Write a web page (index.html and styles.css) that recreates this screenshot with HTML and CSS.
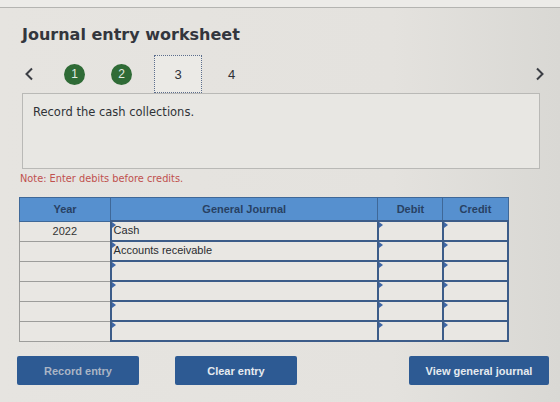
FILE: index.html
```html
<!DOCTYPE html>
<html lang="en">
<head>
    <meta charset="UTF-8">
    <meta name="viewport" content="width=device-width, initial-scale=1.0">
    <title>Journal entry worksheet</title>
    <link rel="stylesheet" href="styles.css">
</head>
<body>
    <div class="topbar"></div>

    <div class="sheet">
        <h1>Journal entry worksheet</h1>

        <!-- step navigation -->
        <nav class="steps">
            <span class="arrow prev">
                <svg width="10" height="14" viewBox="0 0 10 14"><polyline points="8,1.5 2.5,7 8,12.5" fill="none" stroke="#3b3e44" stroke-width="2"/></svg>
            </span>
            <span class="step done first">1</span>
            <span class="step done">2</span>
            <span class="step current">3</span>
            <span class="step plain">4</span>
            <span class="arrow next">
                <svg width="10" height="14" viewBox="0 0 10 14"><polyline points="2,1.5 7.5,7 2,12.5" fill="none" stroke="#3b3e44" stroke-width="2"/></svg>
            </span>
        </nav>

        <div class="task">Record the cash collections.</div>

        <p class="note">Note: Enter debits before credits.</p>

        <table class="journal">
            <thead>
                <tr>
                    <th class="col-year">Year</th>
                    <th class="col-account">General Journal</th>
                    <th class="col-amount">Debit</th>
                    <th class="col-amount">Credit</th>
                </tr>
            </thead>
            <tbody>
                <tr>
                    <td class="year">2022</td>
                    <td class="entry">Cash</td>
                    <td class="entry"></td>
                    <td class="entry"></td>
                </tr>
                <tr>
                    <td class="year"></td>
                    <td class="entry">Accounts receivable</td>
                    <td class="entry"></td>
                    <td class="entry"></td>
                </tr>
                <tr>
                    <td class="year"></td>
                    <td class="entry"></td>
                    <td class="entry"></td>
                    <td class="entry"></td>
                </tr>
                <tr>
                    <td class="year"></td>
                    <td class="entry"></td>
                    <td class="entry"></td>
                    <td class="entry"></td>
                </tr>
                <tr>
                    <td class="year"></td>
                    <td class="entry"></td>
                    <td class="entry"></td>
                    <td class="entry"></td>
                </tr>
                <tr>
                    <td class="year"></td>
                    <td class="entry"></td>
                    <td class="entry"></td>
                    <td class="entry"></td>
                </tr>
            </tbody>
        </table>

        <div class="actions">
            <button class="btn disabled">Record entry</button>
            <button class="btn">Clear entry</button>
            <button class="btn right">View general journal</button>
        </div>
    </div>
</body>
</html>
```

FILE: styles.css
```css
body {
    margin: 0;
    background: linear-gradient(to right, #e6e4e0 0%, #e4e2de 70%, #d9d8d4 100%);
    font-family: "DejaVu Sans", Verdana, sans-serif;
    color: #3b3e44;
}
.topbar {
    height: 7px;
    background-color: #ecebe8;
    border-bottom: 1px solid #b4b4b1;
}
.sheet {
    padding-left: 19px;
}
h1 {
    margin: 17px 0 0 3px;
    font-size: 16px;
    line-height: 20px;
    font-weight: bold;
    color: #33363d;
}

/* steps */
.steps {
    display: flex;
    align-items: center;
    height: 38px;
    margin-top: 10px;
}
.arrow {
    display: flex;
    align-items: center;
}
.arrow.prev {
    margin-left: 5px;
}
.arrow.next {
    margin-left: auto;
    margin-right: 15px;
}
.step {
    display: flex;
    align-items: center;
    justify-content: center;
    font-family: "Liberation Sans", Arial, sans-serif;
    font-size: 12px;
}
.step.done {
    width: 21px;
    height: 21px;
    border-radius: 50%;
    background-color: #2f6b36;
    color: #e4ece4;
    margin-left: 26px;
}
.step.done.first {
    margin-left: 30px;
}
.step.current {
    width: 46px;
    height: 36px;
    margin-left: 22px;
    border: 1px dotted #5b6d8c;
    background-color: #ebeae6;
    color: #2f3136;
    font-size: 13px;
}
.step.plain {
    margin-left: 26px;
    color: #2f3136;
    font-size: 13px;
}

/* task text */
.task {
    margin-left: 3px;
    width: 506px;
    height: 64px;
    padding: 10px 0 0 10px;
    border: 1px solid #b9b9b6;
    background-color: #e8e7e3;
    font-size: 11.5px;
    line-height: 16px;
    color: #2f3237;
}
.note {
    margin: 3px 0 0 1px;
    font-size: 9.8px;
    line-height: 14px;
    color: #c0504e;
}

/* journal grid */
.journal {
    margin-top: 11px;
    width: 490px;
    border-collapse: collapse;
    font-family: "Liberation Sans", Arial, sans-serif;
    font-size: 11px;
}
.journal th {
    height: 22px;
    padding: 0;
    background-color: #5690cf;
    border: 1px solid #3f6898;
    color: #284163;
    font-weight: bold;
}
.col-year {
    width: 90px;
}
.col-account {
    width: 266px;
}
.col-amount {
    width: 64px;
}
.journal td {
    height: 18px;
    padding: 0 2px;
    background-color: #e9e7e3;
}
.journal td.year {
    border: 1px solid #9d9d9b;
    text-align: center;
    color: #333;
}
.journal td.entry {
    position: relative;
    border: 2px solid #3c5c89;
    color: #2a2c30;
    vertical-align: top;
    line-height: 16px;
}
.journal td.entry::before {
    content: "";
    position: absolute;
    top: 0;
    left: 0;
    border-top: 3px solid transparent;
    border-bottom: 3px solid transparent;
    border-left: 4px solid #3e66a6;
}

/* buttons */
.actions {
    display: flex;
    margin-top: 14px;
    padding-right: 11px;
}
.btn {
    height: 29px;
    width: 122px;
    border: none;
    border-radius: 2px;
    background-color: #2d5a93;
    color: #e6eaef;
    font-family: "Liberation Sans", Arial, sans-serif;
    font-size: 11px;
    font-weight: bold;
}
.btn:first-child {
    margin-left: -2px;
}
.btn + .btn {
    margin-left: 36px;
}
.btn.disabled {
    color: #aab5c5;
}
.btn.right {
    width: 140px;
    margin-left: auto;
}
```
